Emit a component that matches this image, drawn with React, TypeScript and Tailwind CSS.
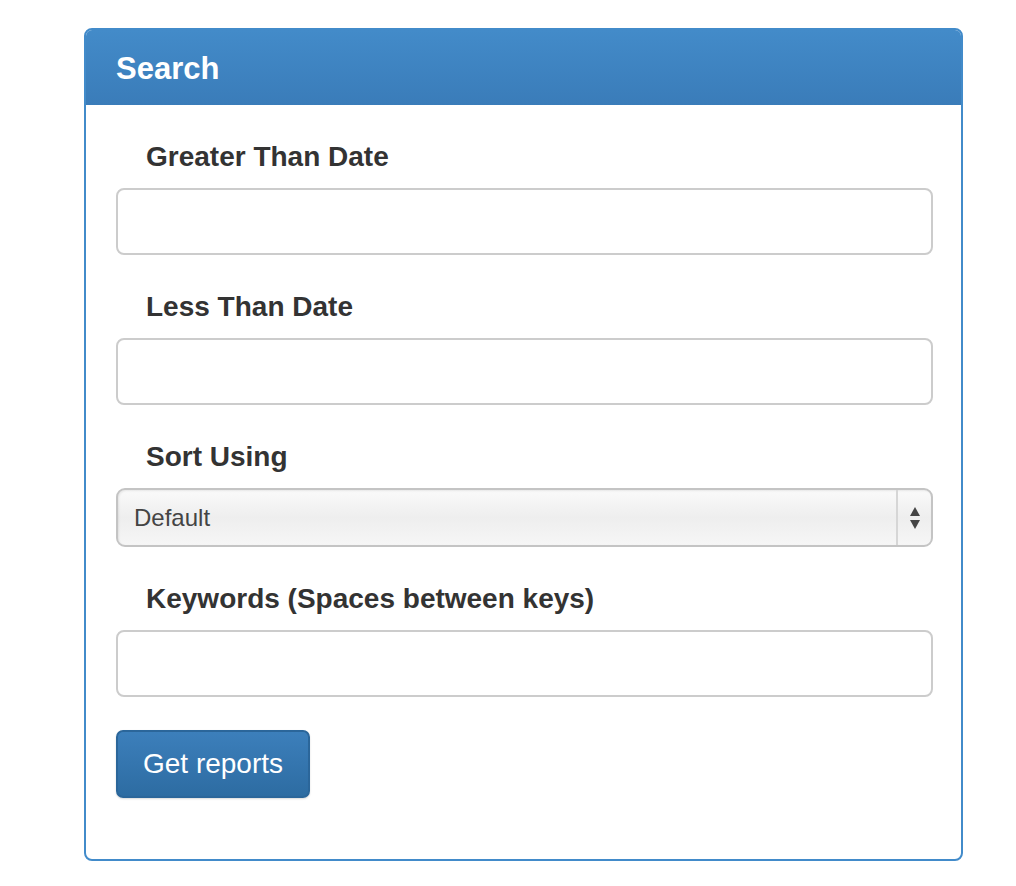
import * as React from "react";

function Field({ label, children }: { label: string; children: React.ReactNode }) {
  return (
    <div className="flex flex-col">
      <label className="mb-[15px] pl-[30px] text-[28px] font-bold leading-[32px] text-[#333]">
        {label}
      </label>
      {children}
    </div>
  );
}

function TextInput() {
  return (
    <input
      type="text"
      className="h-[67px] w-full rounded-[8px] border-2 border-[#cccccc] bg-white px-4 text-[24px] outline-none"
    />
  );
}

function SortSelect() {
  return (
    <div className="flex h-[59px] w-full overflow-hidden rounded-[9px] border-2 border-[#c4c4c4] bg-gradient-to-b from-[#fafafa] via-[#eeeeee] to-[#f6f6f6] shadow-[inset_1px_1px_2px_rgba(0,0,0,0.08)]">
      <div className="flex flex-1 items-center pl-4 text-[24px] text-[#444]">Default</div>
      <div className="flex w-[35px] items-center justify-center border-l-2 border-[#d6d6d6]">
        <svg width="12" height="24" viewBox="0 0 12 24">
          <path d="M6 1 L11 10 L1 10 Z" fill="#444" />
          <path d="M1 14 L11 14 L6 23 Z" fill="#444" />
        </svg>
      </div>
    </div>
  );
}

export default function App() {
  return (
    <div
      className="min-h-[886px] bg-white pl-[84px] pt-[28px]"
      style={{ fontFamily: '"Liberation Sans", Arial, sans-serif' }}
    >
      <div className="w-[879px] overflow-hidden rounded-[8px] border-2 border-[#428bca] bg-white">
        <div className="flex h-[75px] items-center bg-gradient-to-b from-[#438bc9] to-[#3a7cb9] pl-[30px] pt-[3px]">
          <h2 className="text-[31px] font-bold text-white">Search</h2>
        </div>
        <div className="flex flex-col gap-[36px] pl-[30px] pr-[28px] pb-[61px] pt-[36px]">
          <Field label="Greater Than Date">
            <TextInput />
          </Field>
          <Field label="Less Than Date">
            <TextInput />
          </Field>
          <Field label="Sort Using">
            <SortSelect />
          </Field>
          <Field label="Keywords (Spaces between keys)">
            <TextInput />
          </Field>
          <div className="-mt-[3px]">
            <button className="h-[68px] w-[194px] rounded-[7px] border-2 border-[#2b669a] bg-gradient-to-b from-[#3c7fbb] to-[#2d6ca2] text-[28px] text-white shadow-[0_1px_2px_rgba(0,0,0,0.15)]">
              Get reports
            </button>
          </div>
        </div>
      </div>
    </div>
  );
}
